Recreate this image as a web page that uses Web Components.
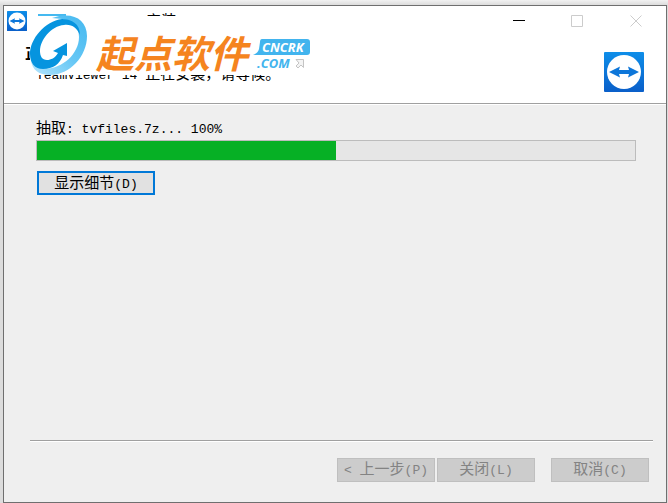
<!DOCTYPE html>
<html lang="zh-CN">
<head>
<meta charset="utf-8">
<title>TeamViewer 14 安装</title>
<style>
  html { height: 100%; }
  body {
    box-sizing: border-box;
    min-height: 100%;
    margin: 0;
    padding: 5px 1px 0 3px;
    display: flex;
    background: linear-gradient(#f2f2f2, #dcdcdc 5px, #dcdcdc);
    font: 15px/20px "Liberation Mono", "Noto Sans CJK SC", monospace;
    color: #000;
  }
  small { font-size: 13px; }
  installer-window { flex: 1; }
</style>
</head>
<body>
<installer-window>
  <title-bar slot="title"><small>TeamViewer 14 </small>安装</title-bar>
  <page-header slot="header">
    正在安装
    <span slot="detail"><small>TeamViewer 14 </small>正在安装，请等候。</span>
  </page-header>
  <install-progress value="50">抽取<small>: tvfiles.7z... 100%</small></install-progress>
  <wizard-button active>显示细节<small>(D)</small></wizard-button>
  <wizard-button slot="actions" disabled><small>&lt; </small>上一步<small>(P)</small></wizard-button>
  <wizard-button slot="actions" disabled>关闭<small>(L)</small></wizard-button>
  <wizard-button slot="actions" class="apart" disabled>取消<small>(C)</small></wizard-button>
  <site-watermark slot="watermark"></site-watermark>
</installer-window>

<script>
class InstallerWindow extends HTMLElement {
  static get template() {
    return `
    <style>
      :host {
        position: relative;
        display: flex;
        flex-direction: column;
        border: 1px solid #6f6f6f;
        background: #efefef;
      }
      main {
        flex: 1;
        display: flex;
        flex-direction: column;
        align-items: flex-start;
        gap: 10px;
        padding: 17px 30px 0 32px;
      }
      footer {
        display: flex;
        justify-content: flex-end;
        gap: 2px;
        margin: 0 13px 0 26px;
        padding: 17px 4px 20px 0;
        border-top: 1px solid #a0a0a0;
        box-shadow: inset 0 1px #fff;
      }
      ::slotted(.apart) { margin-left: 14px; }
      ::slotted(install-progress) { align-self: stretch; }
    </style>
    <slot name="title"></slot>
    <slot name="header"></slot>
    <main><slot></slot></main>
    <footer><slot name="actions"></slot></footer>
    <slot name="watermark"></slot>`;
  }

  constructor() {
    super();
    this.attachShadow({mode: 'open'}).innerHTML = InstallerWindow.template;
  }
}

class AppIcon extends HTMLElement {
  static get template() {
    return `
    <style>
      :host { display: block; width: 40px; height: 40px; flex: none; }
      svg { display: block; width: 100%; height: 100%; }
    </style>
    <svg viewBox="0 0 40 40" aria-hidden="true">
      <defs>
        <linearGradient id="blue" x2="0" y2="1">
          <stop stop-color="#0e8ee9"/>
          <stop offset="1" stop-color="#0a5fc9"/>
        </linearGradient>
      </defs>
      <rect width="40" height="40" rx="1" fill="url(#blue)"/>
      <circle cx="20" cy="20" r="17" fill="#fff"/>
      <path d="M5 20L16 14.500L15 18H25L24 14.500L35 20L24 25.500L25 22H15L16 25.500z" fill="#0d76d9"/>
    </svg>`;
  }

  constructor() {
    super();
    this.attachShadow({mode: 'open'}).innerHTML = AppIcon.template;
  }
}

class TitleBar extends HTMLElement {
  static get template() {
    return `
    <style>
      :host {
        display: flex;
        align-items: center;
        height: 30px;
        padding-left: 3px;
        background: #fff;
      }
      app-icon { width: 20px; height: 20px; }
      .caption { flex: 1; padding: 4px 0 0 10px; white-space: pre; }
      button {
        width: 59px;
        height: 30px;
        padding: 0;
        border: 0;
        background: none;
        color: #ccc;
      }
      button.minimize { color: #000; }
      svg { display: block; width: 13px; height: 13px; margin: auto; }
      path { fill: none; stroke: currentColor; }
    </style>
    <app-icon></app-icon>
    <span class="caption"><slot></slot></span>
    <button class="minimize" aria-label="最小化"><svg viewBox="0 0 13 13"><path d="M1 5.500h12"/></svg></button>
    <button aria-label="最大化" disabled><svg viewBox="0 0 13 13"><path d="M.5 .5h11v11H.5z"/></svg></button>
    <button aria-label="关闭" disabled><svg viewBox="0 0 13 13"><path d="M.5 .5l11 11M11.500 .5l-11 11"/></svg></button>`;
  }

  constructor() {
    super();
    this.attachShadow({mode: 'open'}).innerHTML = TitleBar.template;
  }
}

class PageHeader extends HTMLElement {
  static get template() {
    return `
    <style>
      :host {
        display: flex;
        justify-content: space-between;
        align-items: flex-start;
        padding: 8px 22px 11px 21px;
        border-bottom: 1px solid #a0a0a0;
        background: #fff;
        box-shadow: 0 1px #fff;
      }
      h1 { margin: 0; padding-top: 2px; font: inherit; font-weight: bold; }
      p { margin: 0; padding-left: 11px; }
      app-icon { margin-top: 8px; }
    </style>
    <div>
      <h1><slot></slot></h1>
      <p><slot name="detail"></slot></p>
    </div>
    <app-icon></app-icon>`;
  }

  constructor() {
    super();
    this.attachShadow({mode: 'open'}).innerHTML = PageHeader.template;
  }
}

class InstallProgress extends HTMLElement {
  static get template() {
    return `
    <style>
      :host { display: block; }
      label { display: block; margin-bottom: 1px; line-height: 18px; }
      progress {
        -webkit-appearance: none;
        appearance: none;
        display: block;
        box-sizing: border-box;
        width: 100%;
        height: 21px;
        border: 1px solid #bcbcbc;
        background: #e6e6e6;
      }
      progress::-webkit-progress-bar { background: #e6e6e6; }
      progress::-webkit-progress-value { background: #06b025; }
    </style>
    <label for="bar"><slot></slot></label>
    <progress id="bar" max="100"></progress>`;
  }

  constructor() {
    super();
    this.attachShadow({mode: 'open'}).innerHTML = InstallProgress.template;
  }

  connectedCallback() {
    this.shadowRoot.querySelector('progress').value = Number(this.getAttribute('value'));
  }
}

class WizardButton extends HTMLElement {
  static get template() {
    return `
    <style>
      :host { display: block; }
      :host([active]) { margin-left: 1px; }
      button {
        display: block;
        min-width: 98px;
        height: 24px;
        padding: 2px 0 0;
        border: 1px solid #adadad;
        background: #e1e1e1;
        font: inherit;
        color: inherit;
        white-space: pre;
      }
      :host([active]) button { min-width: 118px; border: 2px solid #0078d7; }
      button:disabled { border-color: #bfbfbf; background: #ccc; color: #838383; }
    </style>
    <button type="button"><slot></slot></button>`;
  }

  constructor() {
    super();
    this.attachShadow({mode: 'open'}).innerHTML = WizardButton.template;
  }

  connectedCallback() {
    this.shadowRoot.querySelector('button').disabled = this.hasAttribute('disabled');
  }
}

class SiteWatermark extends HTMLElement {
  static get template() {
    return `
    <style>
      :host { position: absolute; left: 26px; top: 8px; }
      svg { display: block; width: 284px; height: 62px; }
      text { font-family: "Noto Sans CJK SC", sans-serif; font-weight: bold; font-style: italic; }
      .latin { font-family: "Open Sans", sans-serif; }
    </style>
    <svg viewBox="0 0 284 62">
      <defs>
        <linearGradient id="light" x1="1" x2="0" y2="1">
          <stop stop-color="#45b9f0"/>
          <stop offset=".5" stop-color="#66c7f5"/>
          <stop offset="1" stop-color="#b5e5fd"/>
        </linearGradient>
      </defs>
      <path d="M0 2h284v59H0z" fill="#fff"/>
      <path d="M8 0h28v2H8z" fill="#45b9f0"/>
      <path fill="url(#light)" d="M22 4C42-3 57 5 57 22C57 42 40 61 20 61C9 61 2 56 1 46L10 54C28 58 49 42 49 23C49 13 43 6 32 5z"/>
      <path fill="#0694df" d="M50 21C50 10 42 5 32 5C15 7 0 25 0 40C0 49 5 55 13 55C23 55 30 50 33 41L37 42V29L23 37L28 39C25 44 21 46 17 46C12 46 10 42 10 37C10 26 21 12 34 11C42 10 47 14 50 21z"/>
      <text x="66" y="54" font-size="38" fill="#f5841f">起点软件</text>
      <path d="M232 25h45q3 0 3 3v10q0 3-3 3h-54q5-2 6-6l1-7q0-3 2-3z" fill="#42b4ee"/>
      <text class="latin" x="232" y="38" font-size="13" fill="#fff">CNCRK</text>
      <text class="latin" x="227" y="54" font-size="13" fill="#42b4ee">.COM</text>
      <path d="M266 45.500h7.500v8l-2.500-2.500-3 3-2-2 3-3z" fill="#f4f4f4" stroke="#c4c4c4"/>
    </svg>`;
  }

  constructor() {
    super();
    this.attachShadow({mode: 'open'}).innerHTML = SiteWatermark.template;
  }
}

customElements.define('app-icon', AppIcon);
customElements.define('title-bar', TitleBar);
customElements.define('page-header', PageHeader);
customElements.define('install-progress', InstallProgress);
customElements.define('wizard-button', WizardButton);
customElements.define('site-watermark', SiteWatermark);
customElements.define('installer-window', InstallerWindow);
</script>
</body>
</html>
